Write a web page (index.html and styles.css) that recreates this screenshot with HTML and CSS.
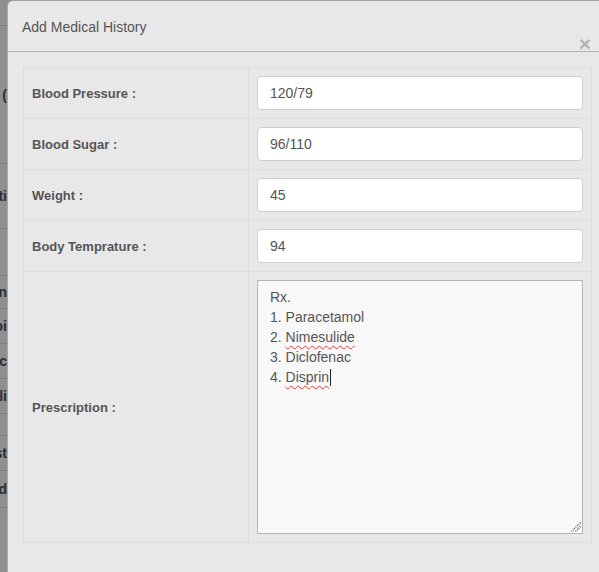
FILE: index.html
```html
<!DOCTYPE html>
<html lang="en">
<head>
    <meta charset="UTF-8">
    <meta name="viewport" content="width=device-width, initial-scale=1.0">
    <title>Add Medical History</title>
    <link rel="stylesheet" href="styles.css">
</head>
<body>
    <!-- Dimmed page behind the modal, only a sliver shows -->
    <div class="backdrop">
        <div class="bg-row h25"></div>
        <div class="bg-row h138"><span>Doctor (</span></div>
        <div class="bg-row h65"><span>Consultati</span></div>
        <div class="bg-row h47"></div>
        <div class="bg-row h33"><span>Medicin</span></div>
        <div class="bg-row h35"><span>Appoi</span></div>
        <div class="bg-row h35"><span>Bal anc</span></div>
        <div class="bg-row h35"><span>Cli</span></div>
        <div class="bg-row h22"></div>
        <div class="bg-row h35"><span>Hist</span></div>
        <div class="bg-row h37"><span>Add</span></div>
    </div>

    <div class="modal">
        <div class="modal-header">
            <h4 class="modal-title">Add Medical History</h4>
            <button class="close" type="button">&times;</button>
        </div>

        <div class="modal-body">
            <div class="history-grid">
                <div class="label-cell">Blood Pressure :</div>
                <div class="value-cell"><input class="field" type="text" value="120/79"></div>

                <div class="label-cell">Blood Sugar :</div>
                <div class="value-cell"><input class="field" type="text" value="96/110"></div>

                <div class="label-cell">Weight :</div>
                <div class="value-cell"><input class="field" type="text" value="45"></div>

                <div class="label-cell">Body Temprature :</div>
                <div class="value-cell"><input class="field" type="text" value="94"></div>

                <div class="label-cell last">Prescription :</div>
                <div class="value-cell last">
                    <div class="prescription" role="textbox" aria-multiline="true">
                        <div>Rx.</div>
                        <div>1. Paracetamol</div>
                        <div>2. <span class="misspelt">Nimesulide</span></div>
                        <div>3. Diclofenac</div>
                        <div>4. <span class="misspelt">Disprin</span><span class="caret"></span></div>
                        <svg class="grip" width="10" height="10" viewBox="0 0 10 10">
                            <path d="M9.5 0.5 L0.5 9.5 M9.5 4.5 L4.5 9.5" stroke="#444" stroke-width="1.2" stroke-dasharray="1 1" fill="none"/>
                        </svg>
                    </div>
                </div>
            </div>
        </div>
    </div>
</body>
</html>
```

FILE: styles.css
```css
html, body {
    height: 100%;
}

body {
    margin: 0;
    display: flex;
    overflow: hidden;
    background-color: #8f8f8f;
    font-family: "Liberation Sans", Arial, sans-serif;
    color: #555;
}

/* Page behind the overlay */
.backdrop {
    flex: none;
    width: 7px;
    overflow: hidden;
}

.bg-row {
    display: flex;
    align-items: center;
    justify-content: flex-end;
    border-bottom: 1px solid #7b7b7b;
    box-sizing: border-box;
    white-space: nowrap;
    font-size: 14px;
    font-weight: bold;
    color: #26303a;
}

.h25 { height: 26px; }
.h138 { height: 138px; }
.h65 { height: 65px; }
.h47 { height: 47px; }
.h33 { height: 33px; }
.h35 { height: 35px; }
.h22 { height: 22px; }
.h37 { height: 37px; }

/* Modal */
.modal {
    flex: none;
    width: 600px;
    background-color: #e8e8e8;
    border-top: 1px solid #a2a2a2;
    border-left: 1px solid #a8a8a8;
    border-top-left-radius: 6px;
}

.modal-header {
    height: 51px;
    box-sizing: border-box;
    display: flex;
    justify-content: space-between;
    padding: 0 17px 0 14px;
    border-bottom: 1px solid #b3b3b3;
}

.modal-title {
    margin: 16px 0 0;
    font-size: 14px;
    font-weight: normal;
    line-height: 20px;
    color: #555;
}

.close {
    align-self: flex-end;
    margin-bottom: -3px;
    padding: 0;
    border: none;
    background: none;
    font-family: "Liberation Sans", Arial, sans-serif;
    font-size: 21px;
    font-weight: bold;
    line-height: 1;
    color: #b3b3b3;
    cursor: pointer;
}

.modal-body {
    padding: 15px;
}

/* Form table */
.history-grid {
    width: 569px;
    box-sizing: border-box;
    display: grid;
    grid-template-columns: 224px 1fr;
    border: 1px solid #dcdcdc;
}

.label-cell {
    display: flex;
    align-items: center;
    padding-left: 8px;
    border-bottom: 1px solid #dcdcdc;
    font-size: 13px;
    font-weight: bold;
    color: #555;
}

.value-cell {
    padding: 8px;
    border-left: 1px solid #dcdcdc;
    border-bottom: 1px solid #dcdcdc;
}

.label-cell.last,
.value-cell.last {
    border-bottom: none;
}

.field {
    display: block;
    width: 100%;
    height: 34px;
    box-sizing: border-box;
    padding: 6px 12px;
    border: 1px solid #cfcfcf;
    border-radius: 4px;
    background-color: #fff;
    font-family: "Liberation Sans", Arial, sans-serif;
    font-size: 14px;
    color: #555;
}

.prescription {
    position: relative;
    height: 254px;
    box-sizing: border-box;
    padding: 6px 12px;
    border: 1px solid #b4b4b4;
    background-color: #f8f8f8;
    font-size: 14px;
    line-height: 20px;
    color: #555;
}

.misspelt {
    text-decoration: underline wavy #e53935;
    text-decoration-thickness: 1px;
    text-underline-offset: 3px;
}

.caret {
    display: inline-block;
    width: 1px;
    height: 17px;
    margin-left: 1px;
    vertical-align: -4px;
    background-color: #222;
}

.grip {
    position: absolute;
    right: 1px;
    bottom: 1px;
}
```
